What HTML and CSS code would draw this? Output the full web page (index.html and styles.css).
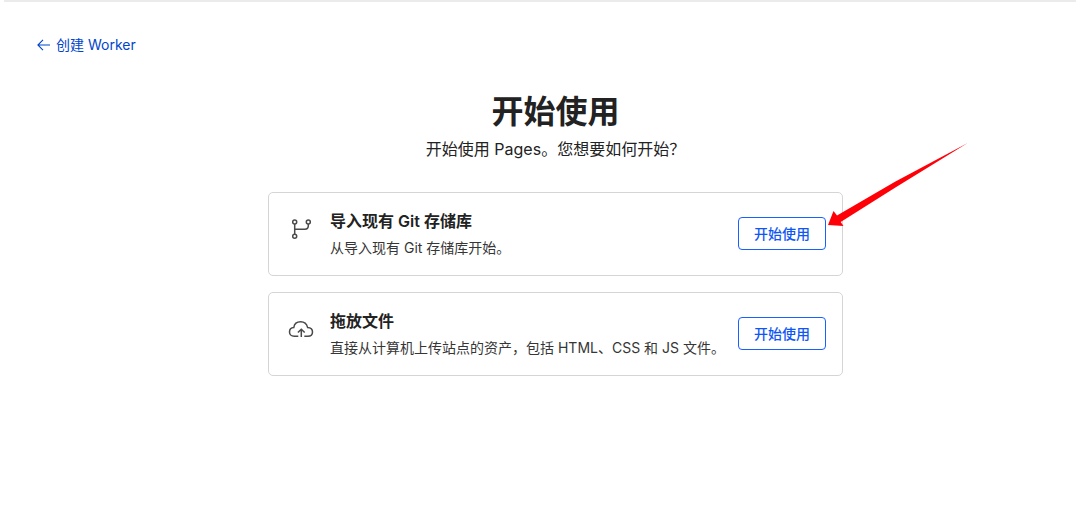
FILE: index.html
```
<!DOCTYPE html>
<html lang="zh-CN">
<head>
    <meta charset="UTF-8">
    <meta name="viewport" content="width=device-width, initial-scale=1.0">
    <title>开始使用 Pages</title>
    <link rel="stylesheet" href="styles.css">
</head>
<body>
    <div class="page">
        <nav>
            <a href="#" class="back-link">
                <svg width="13" height="12" viewBox="0 0 13 12" fill="none" stroke="currentColor" stroke-width="1.1">
                    <path d="M13 6H1M6 .8L.9 6 6 11.2"/>
                </svg>
                <span>创建 Worker</span>
            </a>
        </nav>

        <main class="content">
            <h1>开始使用</h1>
            <p class="subtitle">开始使用 Pages。您想要如何开始？</p>

            <section class="card">
                <svg class="card-icon" width="26" height="26" viewBox="0 0 26 26" fill="none" stroke="currentColor" stroke-width="1.5">
                    <circle cx="6.7" cy="6" r="2"/>
                    <circle cx="20.3" cy="6" r="2"/>
                    <circle cx="6.7" cy="20.3" r="2"/>
                    <path d="M6.7 8v10.3M6.7 13.2h10.1q3.5 0 3.5-3.5V8"/>
                </svg>
                <div class="card-text">
                    <h2>导入现有 Git 存储库</h2>
                    <p>从导入现有 Git 存储库开始。</p>
                </div>
                <div class="card-action">
                    <button type="button" class="btn">开始使用</button>
                    <svg class="pointer" width="142" height="86" viewBox="0 0 142 86" fill="#ff0008">
                        <path d="M140.7 1L68 45.700 13.700 80 16.500 84 1 83 6.500 69 10 73.500 68 39.700Z"/>
                    </svg>
                </div>
            </section>

            <section class="card">
                <svg class="card-icon" width="26" height="26" viewBox="0 0 26 26" fill="none" stroke="currentColor" stroke-width="1.5">
                    <path d="M10.300 20.300H6.200C3.300 20.300 1.500 18.300 1.500 16S3.200 11.700 5.800 11.500C6.300 8.100 9.100 5.800 12.600 5.800S18.700 7.900 19.600 11.400C22.500 11.500 24.500 13.400 24.500 16S22.600 20.300 19.800 20.300H16.300"/>
                    <path d="M13.300 20.900V13.200M9.900 16.500L13.300 13.200 16.700 16.500"/>
                </svg>
                <div class="card-text">
                    <h2>拖放文件</h2>
                    <p>直接从计算机上传站点的资产，包括 HTML、CSS 和 JS 文件。</p>
                </div>
                <div class="card-action">
                    <button type="button" class="btn">开始使用</button>
                </div>
            </section>
        </main>
    </div>
</body>
</html>
```
FILE: styles.css
```
body {
    margin: 0 4px;
    font-family: Inter, "Noto Sans CJK SC", sans-serif;
    font-size: 14px;
    line-height: 20px;
    color: #222;
    background: white;
}
.page {
    padding: 33px 2px 32px 33px;
    border-top: 2px solid #ebebeb;
}
.back-link {
    display: inline-flex;
    align-items: center;
    gap: 6px;
    color: #0045cc;
    text-decoration: none;
}
.content {
    max-width: 575px;
    margin: 36px auto 0;
}
h1 {
    margin: 0;
    font-size: 32px;
    line-height: 40px;
    font-weight: 600;
    text-align: center;
}
.subtitle {
    margin: 5px 0 31px;
    font-size: 16px;
    line-height: 24px;
    text-align: center;
}
.card {
    display: flex;
    align-items: center;
    box-sizing: border-box;
    min-height: 84px;
    margin-bottom: 16px;
    padding: 15px 16px 17px 19px;
    border: 1px solid #d5d5d5;
    border-radius: 5px;
}
.card-icon {
    flex-shrink: 0;
    margin: 0 16px 8px 0;
    color: #4a4a4a;
}
.card-text {
    flex: 1;
}
.card h2 {
    margin: 0 0 5px;
    font-size: 16px;
    line-height: 24px;
    font-weight: 600;
}
.card p {
    margin: 0;
    color: #363636;
}
.card-action {
    position: relative;
    flex-shrink: 0;
}
.btn {
    display: block;
    padding: 6px 15px;
    border: 1px solid #1a5fff;
    border-radius: 4px;
    background: white;
    color: #0f57f5;
    font-family: inherit;
    font-size: 14px;
    line-height: 19px;
    font-weight: 500;
    cursor: pointer;
}
.btn:hover {
    background: #f0f5ff;
}
.pointer {
    position: absolute;
    left: 89px;
    bottom: 22px;
    pointer-events: none;
}
```
